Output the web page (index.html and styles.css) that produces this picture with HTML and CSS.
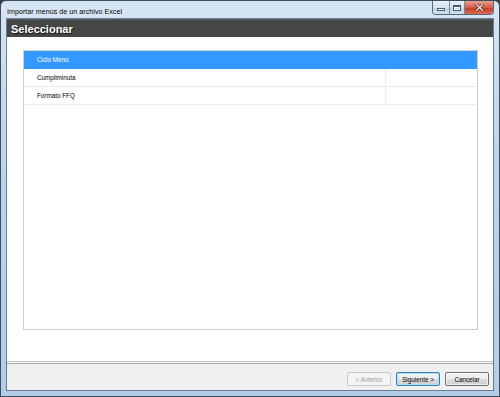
FILE: index.html
```html
<!DOCTYPE html>
<html lang="es">
<head>
<meta charset="utf-8">
<title>Importar menús de un archivo Excel</title>
<link rel="stylesheet" href="styles.css">
</head>
<body>
<div class="window">
  <div class="titlebar">
    <span class="title">Importar menús de un archivo Excel</span>
    <div class="caption">
      <span class="cap cap-min"><span class="glyph-min"></span></span>
      <span class="cap cap-max"><span class="glyph-max"></span></span>
      <span class="cap cap-close">
        <svg width="9" height="7" viewBox="0 0 9 7"><path d="M1.5 0.8 L7.5 6.2 M7.5 0.8 L1.5 6.2" stroke="#5a1a10" stroke-width="2.6" stroke-linecap="square"/><path d="M1.5 0.8 L7.5 6.2 M7.5 0.8 L1.5 6.2" stroke="#ffffff" stroke-width="1.3" stroke-linecap="square"/></svg>
      </span>
    </div>
  </div>
  <div class="client">
    <div class="header">Seleccionar</div>
    <div class="content">
      <div class="list">
        <div class="row selected"><span class="c1">Ciclo Menú</span><span class="c2"></span></div>
        <div class="row"><span class="c1">Cumpliminuta</span><span class="c2"></span></div>
        <div class="row"><span class="c1">Formato FFQ</span><span class="c2"></span></div>
      </div>
    </div>
    <div class="separator"></div>
    <div class="footer">
      <button class="btn disabled">&lt; Anterior</button>
      <button class="btn default">Siguiente &gt;</button>
      <button class="btn">Cancelar</button>
    </div>
  </div>
</div>
</body>
</html>
```
FILE: styles.css
```css
* { box-sizing: border-box; }
html, body { margin: 0; padding: 0; }
body {
  width: 500px;
  height: 397px;
  background: #3a3a3a;
  font-family: "Liberation Sans", Arial, sans-serif;
  overflow: hidden;
}
.window {
  width: 500px;
  height: 397px;
  border: 1px solid #3f4c5c;
  border-radius: 6px 6px 0 0;
  background: linear-gradient(to bottom, #d6e5f4 0%, #bcd4ec 40%, #b3cde8 100%);
  padding: 0 5px 5px 5px;
  display: flex;
  flex-direction: column;
}
.titlebar {
  height: 17px;
  display: flex;
  align-items: flex-start;
  justify-content: space-between;
  position: relative;
}
.title {
  font-size: 7.2px;
  color: #000;
  margin-left: 1px;
  margin-top: 6px;
  line-height: 9px;
  text-shadow: 0 0 4px rgba(255,255,255,0.9);
}
.caption {
  display: flex;
  height: 14px;
  margin-right: 0px;
  border: 1px solid #5b6878;
  border-top: none;
  border-radius: 0 0 4px 4px;
  overflow: hidden;
}
.cap {
  display: flex;
  align-items: center;
  justify-content: center;
  height: 13px;
}
.cap-min, .cap-max {
  width: 17px;
  background: linear-gradient(to bottom, #e8f0f8 0%, #d2e0ee 50%, #bfd2e6 51%, #cfdff0 100%);
  border-right: 1px solid #7b8898;
}
.cap-max { width: 15px; }
.cap-close {
  width: 28px;
  background: linear-gradient(to bottom, #e8a090 0%, #d45c48 50%, #c43c26 51%, #d86a50 100%);
}
.glyph-min {
  width: 8px;
  height: 3px;
  background: #fff;
  border: 1px solid #4a5868;
  margin-top: 4px;
}
.glyph-max {
  width: 8px;
  height: 6px;
  border: 1px solid #4a5868;
  box-shadow: inset 0 0 0 1px #fff;
  border-top-width: 2px;
}
.client {
  flex: 1;
  display: flex;
  flex-direction: column;
  border: 1px solid #6b7d92;
  background: #fff;
}
.header {
  height: 18px;
  background: #464646;
  color: #fff;
  font-weight: bold;
  font-size: 11px;
  line-height: 18px;
  padding-left: 4px;
  text-shadow: 1px 1px 1px #111;
  border-top: 1px solid #5a5a5a;
}
.content {
  flex: 1;
  padding: 13px 15px 31px 16px;
  display: flex;
}
.list {
  flex: 1;
  border: 1px solid #cdcdcd;
  background: #fff;
}
.row {
  display: flex;
  height: 18px;
  border-bottom: 1px solid #ececec;
  font-size: 6.3px;
  color: #000;
}
.row .c1 {
  width: 362px;
  padding-left: 13px;
  line-height: 17px;
  border-right: 1px solid #ececec;
}
.row .c2 { flex: 1; }
.row.selected {
  background: #3399ff;
  color: #fff;
  border-bottom-color: #3399ff;
  height: 18px;
}
.row.selected .c1 { border-right-color: #3399ff; }
.separator {
  height: 3px;
  border-top: 1px solid #c4c4c4;
  border-bottom: 1px solid #a9a9a9;
  background: #f8f8f8;
}
.footer {
  height: 26px;
  background: #f0f0f0;
  display: flex;
  justify-content: flex-end;
  align-items: flex-start;
  gap: 5px;
  padding: 8px 4px 0 0;
}
.btn {
  width: 44px;
  height: 14px;
  padding: 0;
  font-family: "Liberation Sans", Arial, sans-serif;
  font-size: 6.3px;
  color: #000;
  border: 1px solid #707070;
  border-radius: 2px;
  background: linear-gradient(to bottom, #f4f4f4 0%, #ebebeb 50%, #dddddd 51%, #cfcfcf 100%);
  box-shadow: inset 0 0 0 1px rgba(255,255,255,0.7);
}
.btn.default {
  border-color: #3c7fb1;
  box-shadow: inset 0 0 0 1px #a8e0f8;
}
.btn.disabled {
  color: #a0a0a0;
  border-color: #c8c8c8;
  background: #f4f4f4;
  box-shadow: none;
}
```
